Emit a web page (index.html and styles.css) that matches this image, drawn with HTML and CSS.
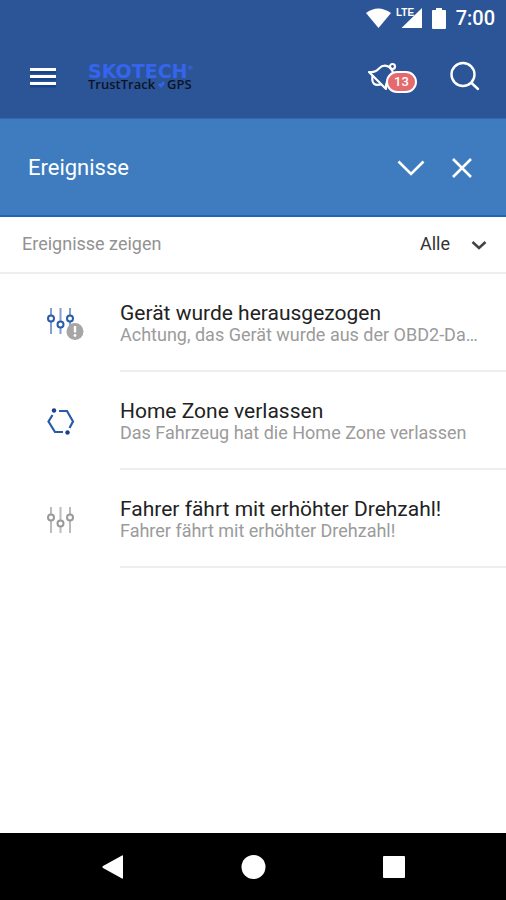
FILE: index.html
```html
<!DOCTYPE html>
<html lang="de">
<head>
<meta charset="utf-8">
<meta name="viewport" content="width=device-width, initial-scale=1">
<title>Ereignisse</title>
<link rel="stylesheet" href="styles.css">
</head>
<body>
<div class="screen">
  <header class="top">
    <div class="status">
      <svg width="57" height="24" viewBox="0 0 57 24" aria-hidden="true">
        <path d="M1 7Q13 -2 26 7L13.500 22Z" fill="#fff"/>
        <path d="M57 2V22H36.500Z" fill="#fff"/>
        <path d="M30 0h16v10H30z" fill="#2c5598"/>
        <text class="lte" x="31" y="10">LTE</text>
      </svg>
      <svg width="14" height="24" viewBox="0 0 14 24" aria-hidden="true"><path d="M4 2h6v2h3q1 0 1 1v17q0 1-1 1H1q-1 0-1-1V5q0-1 1-1h3z" fill="#fff"/></svg>
      <span class="clock">7:00</span>
    </div>
    <div class="appbar">
      <button class="icon-btn" aria-label="Menü">
        <svg width="28" height="24" viewBox="0 0 28 24"><path d="M2 7H28M2 14H28M2 21H28" stroke="#174489" stroke-width="3"/><path d="M2 4.500H28M2 11.500H28M2 18.500H28" stroke="#fff" stroke-width="3"/></svg>
      </button>
      <a class="brand" href="#">
        <span class="brand-name">SKOTECH<small>®</small></span>
        <span class="brand-sub">TrustTrack<svg width="12" height="10" viewBox="0 0 12 10" aria-hidden="true"><path d="M4 5l2 2 3-4" fill="none" stroke="#3564ed" stroke-width="2.500"/></svg>GPS</span>
      </a>
      <button class="icon-btn bell" aria-label="Benachrichtigungen">
        <svg width="32" height="32" viewBox="0 0 32 32" fill="none" stroke="#fff" stroke-width="2.200" stroke-linejoin="round" stroke-linecap="round"><path d="M1 11Q7 12 11 7.500Q16 2.500 22 6.500Q27 12 24 17Q17 20 18 28Z"/><circle cx="24.500" cy="5.500" r="2.500"/><path d="M4.500 15Q3 26 13 23.500"/></svg>
        <span class="badge">13</span>
      </button>
      <button class="icon-btn" aria-label="Suchen">
        <svg width="32" height="32" viewBox="0 0 32 32" fill="none" stroke="#fff" stroke-width="2.400" stroke-linecap="round"><circle cx="13" cy="13.500" r="11.500"/><path d="M21.500 22L28 28"/></svg>
      </button>
    </div>
  </header>
  <div class="subheader">
    <h1>Ereignisse</h1>
    <button class="icon-btn" aria-label="Aufklappen"><svg width="32" height="32" viewBox="0 0 32 32" fill="none" stroke="#fff" stroke-width="2.600"><path d="M3.500 9.500L16 22L28.500 9.500"/></svg></button>
    <button class="icon-btn" aria-label="Schließen"><svg width="32" height="32" viewBox="0 0 32 32" fill="none" stroke="#fff" stroke-width="2.600"><path d="M7 7L25 25M25 7L7 25"/></svg></button>
  </div>
  <div class="filter">
    <label for="show">Ereignisse zeigen</label>
    <div class="select">
      <select id="show"><option>Alle</option></select>
      <svg width="16" height="12" viewBox="0 0 16 12" fill="none" stroke="#444" stroke-width="2.600" aria-hidden="true"><path d="M1.500 4L8 10L14.500 4"/></svg>
    </div>
  </div>
  <main>
    <ul class="events">
      <li class="event">
        <svg width="40" height="40" viewBox="0 0 40 40" aria-hidden="true">
          <path class="rail" d="M7 5V31M16.500 5V31M26 5V31"/>
          <g class="knob"><circle cx="7" cy="15.500" r="3"/><circle cx="16.500" cy="21.500" r="3"/><circle cx="26" cy="15.500" r="3"/></g>
          <circle cx="31" cy="28.500" r="8.500" fill="#a6a6a6"/><path d="M31 23V29.500" stroke="#fff" stroke-width="2.400"/><circle cx="31" cy="32.500" r="1.400" fill="#fff"/>
        </svg>
        <div class="text"><h2>Gerät wurde herausgezogen</h2><p>Achtung, das Gerät wurde aus der OBD2-Da…</p></div>
      </li>
      <li class="event">
        <svg width="40" height="40" viewBox="0 0 40 40" aria-hidden="true"><path d="M15 10H23L29 20.500L25.500 27M19 31H11L4.500 20.500L8.500 14" fill="none" stroke="#285ba8" stroke-width="2.200"/><circle cx="10" cy="9.500" r="2.200" fill="#183f93"/><circle cx="23.500" cy="31.500" r="2.200" fill="#183f93"/></svg>
        <div class="text"><h2>Home Zone verlassen</h2><p>Das Fahrzeug hat die Home Zone verlassen</p></div>
      </li>
      <li class="event muted">
        <svg width="40" height="40" viewBox="0 0 40 40" aria-hidden="true">
          <path class="rail" d="M7 8V34M16.500 8V34M26 8V34"/>
          <g class="knob"><circle cx="7" cy="18.500" r="3"/><circle cx="16.500" cy="24.500" r="3"/><circle cx="26" cy="18.500" r="3"/></g>
        </svg>
        <div class="text"><h2>Fahrer fährt mit erhöhter Drehzahl!</h2><p>Fahrer fährt mit erhöhter Drehzahl!</p></div>
      </li>
    </ul>
  </main>
  <nav class="navbar">
    <button class="icon-btn" aria-label="Zurück"><svg width="24" height="24" viewBox="0 0 24 24"><path d="M23 1V23Q23 24 22 23.500L3 13Q1.500 12 3 11L22 .500Q23 0 23 1Z" fill="#fff"/></svg></button>
    <button class="icon-btn" aria-label="Startseite"><svg width="24" height="24" viewBox="0 0 24 24"><circle cx="12.500" cy="12" r="12" fill="#fff"/></svg></button>
    <button class="icon-btn" aria-label="Übersicht"><svg width="24" height="24" viewBox="0 0 24 24"><rect x="1" y="1" width="22" height="22" rx="1" fill="#fff"/></svg></button>
  </nav>
</div>
</body>
</html>
```
FILE: styles.css
```css
* { box-sizing: border-box; }
body { margin: 0; font-family: Roboto, sans-serif; background: #fff; }
h1, h2, p, ul { margin: 0; padding: 0; font-weight: 400; }
svg { display: block; flex: none; overflow: visible; }
.screen { display: flex; flex-direction: column; min-height: 100vh; }

.top { background: #2c5598; color: #fff; border-bottom: 1px solid #3468ae; }
.status { display: flex; justify-content: flex-end; align-items: center; gap: 10px; height: 36px; padding: 0 11px 0 0; }
.lte { font: 700 10px "Liberation Sans", sans-serif; fill: #fff; }
.clock { font-size: 20px; line-height: 32px; font-weight: 500; }
.appbar { display: flex; align-items: center; height: 82px; padding: 0 24px 0 28px; }
.icon-btn { display: flex; padding: 0; border: 0; background: none; cursor: pointer; }
.brand { display: flex; flex-direction: column; margin: 0 auto 0 32px; text-decoration: none; }
.brand-name { display: flex; color: #3564ed; font: 700 19px/14px "DejaVu Sans", sans-serif; }
.brand-name small { font-size: 6px; line-height: 8px; }
.brand-sub { display: flex; align-items: center; color: #0c1428; font: 600 13px/13px "Open Sans", sans-serif; }
.bell { position: relative; margin-right: 50px; }
.badge { position: absolute; left: 18px; top: 10px; width: 31px; height: 22px; border: 2px solid #fff; border-radius: 11px; background: #e46a6d; color: #fff; font: 500 13px/18px Roboto, sans-serif; text-align: center; }

.subheader { display: flex; align-items: center; gap: 19px; height: 98px; padding: 2px 28px 0; background: #3e7cbf; border-bottom: 2px solid #1c68b3; color: #fff; }
.subheader h1 { flex: 1; font-size: 22px; line-height: 28px; }

.filter { display: flex; justify-content: space-between; align-items: center; height: 57px; padding: 0 19px 2px 22px; border-bottom: 2px solid #eee; color: #929292; font-size: 18px; }
.select { display: flex; align-items: center; }
.select select { appearance: none; width: 67px; padding: 0; border: 0; background: none; color: #333; font: 18px/24px Roboto, sans-serif; margin-right: -16px; }
.select svg { pointer-events: none; }

main { flex: 1; }
.events { list-style: none; }
.event { display: flex; align-items: center; gap: 36px; padding-left: 44px; height: 98px; }
.text { flex: 1; min-width: 0; height: 98px; padding: 27px 20px 0 0; border-bottom: 2px solid #eee; }
.text h2 { color: #222; font-size: 21px; line-height: 24px; }
.text p { color: #9b9b9b; font-size: 18px; line-height: 20px; overflow: hidden; text-overflow: ellipsis; white-space: nowrap; }
.rail { fill: none; stroke: #829fce; stroke-width: 2; }
.knob { fill: #fff; stroke: #285ba8; stroke-width: 2; }
.muted .rail { stroke: #bbb; }
.muted .knob { stroke: #999; }

.navbar { display: flex; justify-content: center; align-items: center; gap: 117px; height: 67px; background: #000; }
```
